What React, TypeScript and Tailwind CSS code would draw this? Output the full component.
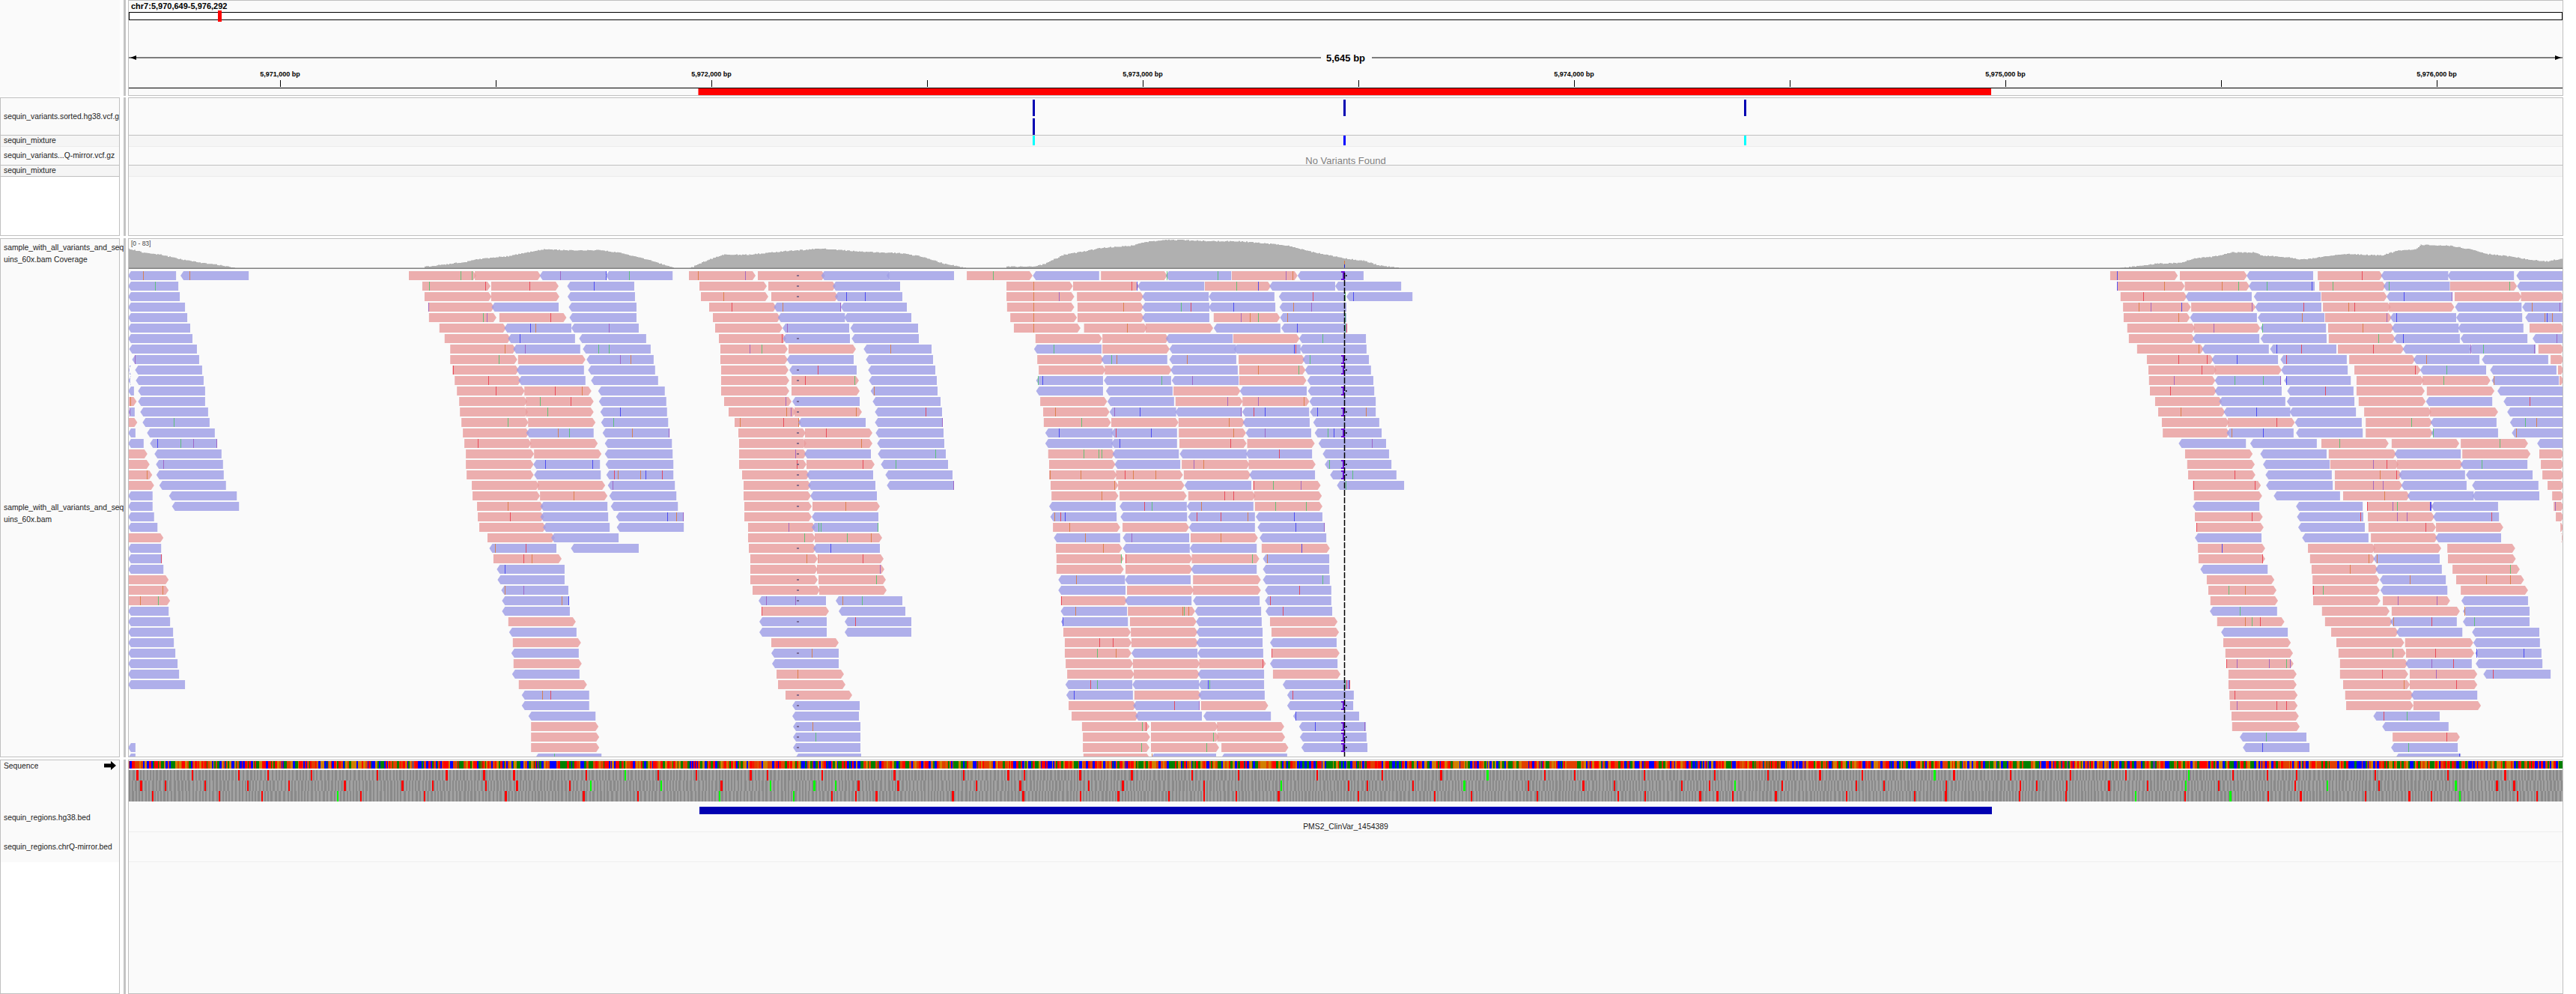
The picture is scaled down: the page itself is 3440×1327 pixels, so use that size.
import React from "react"

type Crop = { ox: number; width: number; rows: string[] }

const PINK = "#e89b9b"
const BLUE = "#9c9ce6"
const MARKS: Record<string, string> = {
  g: "#4fc26a",
  r: "#e8394a",
  b: "#3b3bf0",
  o: "#d9793c",
  v: "#9a5cc0",
}

const crops: Crop[] = [
  {
    ox: 160,
    width: 780,
    rows: [
      "b22-151:62o b163-346:186o p776-957:914g,944g p953-1130 b1127-1307:1183v,1305b b1305-1484:1366g",
      "b22-157:95g p812-995:830g,980r p997-1178:1099r b1201-1381:1273b",
      "b22-161 p818-998 p997-1180 b1202-1383",
      "b22-175 p828-1005:828v b998-1178 b1205-1387",
      "b22-181 p830-1011:974g,985v p1019-1199:1155r b1207-1387",
      "b22-189 p858-1037 b1032-1212:1101b,1115o b1212-1393:1312v",
      "b22-195 p872-1049 b1042-1222:1074b b1233-1413",
      "b25-207 p887-1063:1034o b1056-1236:1087v b1243-1425:1284g,1312g",
      "b33-213:41v p887-1067:1018g p1069-1250 b1253-1433:1342v,1370o",
      "b22-26 b41-221 p893-1071:895r b1065-1246 b1257-1437",
      "b22-28 b43-225 p899-1077:990r b1070-1250 b1265-1445",
      "b22-38 b49-229 p905-1087:1010r p1086-1266:1167r,1241o b1284-1463",
      "p22-45:29o b49-229 p911-1094 p1090-1272:1127g,1211r b1286-1467",
      "b22-40:27v b55-237 p913-1096 p1090-1272:1147g b1290-1469:1342b",
      "p22-47 b61-241:144g p917-1097:1042g p1096-1277 b1292-1472:1324g",
      "b22-42 b73-255 p921-1099 b1091-1272:1177o,1207g b1296-1476:1376o,1474v",
      "b22-64 b81-261:100b,162g,198v,259v p925-1105:960r p1102-1283 b1302-1482",
      "p22-74 b93-273 p929-1112 p1112-1293 b1302-1484",
      "p22-80 b97-277:116v p929-1111 b1110-1289:1141b,1269b b1304-1486",
      "p22-87:73o b98-279 p931-1111 b1112-1291 b1306-1486:1326r,1336o,1398o,1412b,1456r",
      "p22-92 b106-285 p945-1126 p1122-1303 b1310-1490:1322v",
      "b22-88 b132-314 p947-1128 p1128-1309:1219o b1314-1494",
      "b22-88 b140-320 p959-1137:1042o b1129-1309 b1318-1498",
      "b22-92 p961-1139:1048r b1129-1311 b1332-1514:1470b,1493o,1512v",
      "b22-101 p965-1144 b1136-1315 b1334-1514",
      "p22-117 p987-1168 b1158-1339",
      "b22-111 b992-1172:1008o,1089r b1211-1393",
      "b22-113:110r p1003-1186:1083r,1105o",
      "b22-117 b1012-1194:1034b",
      "p22-131 b1014-1194",
      "p22-131:114o b1024-1204:1034o,1083v",
      "p22-135:55o,102g b1026-1206:1187o,1204b",
      "b22-131 b1026-1208",
      "b22-135 p1043-1224",
      "b22-143 b1045-1226",
      "b22-145 p1055-1238",
      "b22-149 b1051-1232",
      "b22-155 p1057-1240",
      "b22-159 b1053-1234",
      "b22-175 p1071-1254",
      "b1079-1260:1133o,1155r",
      "b1079-1260",
      "b1097-1277",
      "p1104-1285",
      "p1104-1287",
      "b22-42 p1104-1287",
      "b22-42 b1115-1293:1165g",
    ],
  },
  {
    ox: 930,
    width: 500,
    rows: [
      "p-30-237:6o,196v p246-515 b500-772 b762-1032",
      "p12-282 p288-558 b546-816",
      "p18-288:109o p300-568 b555-825:601b,676b",
      "p51-320:142r b310-580:346o,575v b578-843",
      "p66-336 b326-595 b592-861",
      "p75-345 b345-612:364v b617-888",
      "p90-360:343r b346-615 b622-891",
      "p96-366:214v,262g p369-639 b670-942:778o",
      "p96-366 b362-630 b679-948",
      "p99-369 b372-642:487r b688-957",
      "p99-372 p381-651:436r,634g b691-963",
      "p99-372 p381-654 b698-966:712o",
      "p111-381:358v b384-654 b706-978",
      "p129-399:361o,379v p393-663:640o b715-984:919r",
      "p153-420:175o,349r,409o b408-678 b715-987:984v",
      "p168-438 p435-705:520r b718-990",
      "p171-441 p432-705:661o b724-993",
      "p171-441:397v b432-699 b727-999:958g",
      "p171-441:403r p441-714:667r b739-1008:799g",
      "p183-453 b441-708 b757-1026",
      "p189-459 b447-717 b763-1032:1030v",
      "p189-459 b456-723",
      "p192-462 p465-735:598o",
      "p192-462 b462-729",
      "p207-477:370v b462-729:490g,499g,725g",
      "p207-477:432g p474-744:604g,700o",
      "p210-480 b468-735:538b",
      "p216-486:442o,487o p486-750:667r",
      "p216-486 p483-753:736v",
      "p216-486 p489-759:721g",
      "p225-495 p492-762",
      "b249-519:280v,397v b558-825:586o,664g",
      "p261-531:262r b570-837",
      "b252-522 b594-861:637r",
      "b252-522 b594-861",
      "p300-570",
      "b300-570:463o",
      "b303-570",
      "p321-591:406o",
      "p327-597",
      "p357-624",
      "b384-654",
      "b384-651",
      "b387-657:466o",
      "b387-657:478g",
      "b387-657",
      "b396-660",
    ],
  },
  {
    ox: 1280,
    width: 620,
    rows: [
      "p28-250:117g b251-475 p481-705 b700-921:702g,876g p923-1145:1106v,1129o b1145-1368",
      "p162-386:254o p387-610:583r,601b b605-830 p832-1055:939g,1012b b1050-1272 b1272-1495",
      "p162-391:254o,340v p400-625 b620-845 b845-1067 b1082-1305:1197r,1305g b1310-1533:1333b",
      "p164-391:254o p402-625:557o b620-847:750g,785r b845-1070:927b b1084-1310:1131o,1190v",
      "p175-400:254o p402-627 b620-847 p862-1086:954v,985o,1012g b1086-1310:1109o,1306g",
      "p187-412:254o p424-637:570o p632-860 b862-1087 b1090-1312:1142b,1306g,1311r",
      "p260-485 p486-710 b700-926 p928-1152 b1150-1376:1230g",
      "b255-483:320g p486-713 b712-937 b930-1155:1134b,1139r b1153-1378",
      "p266-490 b482-705:517g,534o b712-938:772o p946-1170 b1162-1386:1187g",
      "p271-497 p494-720 b716-943 p948-1172:1012o,1147g b1170-1393",
      "b262-488:268g,284b b491-718:686g b720-946:790v p948-1175 b1178-1401",
      "b262-488 b498-723 p726-952 b950-1176 b1180-1404",
      "p276-502 b503-728 p733-960:909v p959-1185:1012v,1167o b1185-1409",
      "p286-510:325o b510-735:527v,613b b732-957:953v b958-1184:997r,1035b b1187-1409:1212b,1376o",
      "p288-515:416g p516-743 p743-967:914o b960-1186 b1198-1421",
      "b293-520:340b b516-738:530r,651b p744-971:929o b970-1191:1035v b1203-1429:1248g,1266b",
      "b293-520 b516-738:545b p746-973:919r p975-1203 b1216-1444:1397v",
      "p303-528:423g,474g,482g b520-744 b747-973 b970-1194:1083r b1230-1454",
      "p306-530 b527-749 p754-983:793v,828o p980-1206 b1237-1462:1252g",
      "p306-535:309o,413o p532-758:562r,590o,666o p761-987 b982-1204 b1255-1479:1331g",
      "p311-540:525o p539-763 b763-989 p995-1223:997r,1063g,1157v b1278-1505:1307g",
      "p314-540:484o p544-771 p776-1003:899r,929r p998-1227",
      "b306-531 b544-771:628r,653g b771-996:820o p1001-1229:1070g,1174g",
      "b310-534:324o,345r,358b b547-772 b775-1001:805r,884r,975o b1004-1229:1134b",
      "p319-546:375o p554-779 b778-1001 b1010-1237:1139b,1235v",
      "b322-546:428o b555-779:583v p784-1011:886o b1017-1242",
      "p329-553:487o b555-781 b781-1007 p1024-1254:1159b",
      "p331-558:548g p564-790:565r p788-1016:992g b1028-1252:1043o",
      "p331-558 p564-790 b785-1007 b1028-1252",
      "b337-562:398o b562-784 p792-1021 b1028-1254:1230g",
      "b337-564 p569-795 p792-1021 b1035-1259:1151r",
      "p346-570:347r b562-787 b792-1017 b1035-1259:1053r",
      "b345-569:395o p572-799:755o,762g,777o b798-1022 b1037-1262:1094r",
      "b346-572:352b p579-804 b802-1024 p1052-1280",
      "p354-582 p582-808 b803-1027 p1057-1285",
      "p359-585:476r,520r p584-810 b803-1027 b1052-1277",
      "p359-584:468g,532o b584-807 b807-1029 p1058-1287:1058r",
      "p362-590 p589-816 p813-1038:1028r b1052-1280",
      "p367-594 p592-815 b808-1032 p1062-1290",
      "b361-587:444r,469g b587-812 b810-1032:841b,846g b1095-1320:1305g,1311r,1317b,1321r",
      "b364-589:390b p594-820 b810-1034 b1110-1335:1129r",
      "p372-600 b590-813:729r,811v p819-1046 b1110-1333",
      "p382-608 b597-822 b827-1055 b1130-1353:1139b",
      "p417-645:620g,633r p650-877 p873-1100 b1150-1376:1205b,1370v",
      "p420-647 p650-880:860g p874-1103 b1153-1378",
      "p420-645:618g p650-880:836g p888-1114 b1158-1381",
      "p422-646 b650-870:652o b887-1110",
    ],
  },
  {
    ox: 2800,
    width: 640,
    rows: [
      "p44-265:67b p272-492 b490-708 p723-935:868r b930-1150 b1148-1365 b1373-1530",
      "p68-288:67b,221o p288-500:410o,464g b497-713:555g,702b p728-945:772g b938-1155:956g p1156-1375:1350g b1375-1530",
      "p78-295:153r b290-507 b514-733 p735-950 b948-1163:1005b,1161v p1171-1390 p1388-1530",
      "p86-308:138o,177v,278b p309-520:508v b518-735:677r p740-962:824o,843r p956-1170 b1172-1390 b1392-1530:1424o,1513v",
      "p88-305:266o b305-524 b527-745:672o p747-965:949v b960-1176:979b b1176-1392 b1402-1530:1464o,1473b,1490o",
      "p100-322 p318-535:383v b535-750:542g p757-972:870o b965-1184 b1182-1396 p1416-1530",
      "p105-320 b314-532 b536-752 p759-977:922g b972-1188:1003b b1190-1409 b1426-1530:1505v",
      "p132-350:332o b344-563 b567-784:587b,670r p789-1005:905r b1001-1222 b1218-1436:1223v,1265g,1431v p1445-1530",
      "p164-382:266r,359r b376-593:459b b601-818:620r p826-1042 b1036-1252:1079o b1260-1477 p1485-1530",
      "p169-392:342r p386-605 b603-821 p843-1060:1042r b1058-1274:1143g b1287-1504 p1509-1530",
      "p171-388:253v b386-603:452g,543g,600v b613-831:621b p850-1070 p1066-1288:1135g b1292-1512:1299o p1514-1530",
      "p174-392:239r b386-605 b623-840:748r p850-1073 p1080-1301 b1311-1530",
      "p191-410 b400-617 b622-843 p857-1076 b1077-1294 b1331-1530:1417r",
      "p201-420:275o b415-633:522b b631-848 p875-1095 p1090-1313 b1343-1530",
      "p213-433 p429-648:589r b648-867 p880-1098:1028g b1092-1308 b1352-1530:1402g,1437o",
      "p216-435 b425-644:442o,545b b652-870 p880-1100 b1094-1313:1101g b1358-1530:1371o",
      "b268-488 b502-720 p735-955:795g p965-1186 p1191-1411:1319g b1441-1530",
      "p289-510 b535-752 p759-980 b974-1191 p1196-1419 p1448-1530",
      "p296-517 b544-762 p764-988:903v,947r p982-1198 b1190-1409:1260g p1453-1530",
      "p299-519:452r b552-769 p779-998:925o,981r b988-1205 b1208-1426 p1458-1530",
      "p315-537:316r,518r b554-772 p779-1000:905v,937v b996-1210 b1228-1445 p1475-1530",
      "p318-541 b579-796 p806-1024:941o b1016-1233 b1229-1448 p1490-1530",
      "b314-532 b652-870 p885-1100:885r,968v,983g,1090b,1093b b1094-1313 p1495-1530:1500v",
      "p321-543:508r b655-872:863r p887-1105:983v,1015v b1100-1316:1292r p1502-1530",
      "p326-546:327r b659-877 p889-1110:1075r p1110-1330 p1517-1530",
      "b321-539 b672-889 p897-1115 b1108-1323 p1522-1530",
      "p331-551:410b p691-912 p906-1127 p1147-1369",
      "p333-551:541r p698-910:890o b905-1122:917o p1149-1371",
      "b339-559 p703-920:829o b912-1129 p1164-1384:1353g",
      "p360-581 p706-925 b926-1142:1025o p1176-1398:1275o,1353o",
      "p365-588:432g,486o p706-926:708r,741g b928-1147 p1191-1411",
      "p372-593 p708-928 p936-1156:986v,1113v b1193-1411",
      "b370-590:468g p737-958 p965-1188 b1198-1416:1204o",
      "p394-614:484o,508g,533r p747-968 b960-1178:971o,1094r b1198-1416:1236g",
      "b407-625 p767-987 b980-1196 b1228-1448",
      "p414-635 p784-1006 p1009-1232 b1232-1450",
      "p421-642 p791-1011:968g p1012-1235:1108r b1238-1455:1243b,1397b",
      "p424-644:425r,457v,564v,621g,631v p796-1018 b1010-1227:1096v,1167r b1240-1458",
      "p431-654 p796-1019:934r p1024-1245:1111v b1265-1485:1297r",
      "p431-654 p806-1025:1005o p1024-1245:1175r",
      "p434-657:451r p813-1036 b1028-1245",
      "p436-657:459v,587r,621r p816-1036 p1036-1257",
      "p441-661 b905-1122:939r,1015g",
      "p443-664 b934-1151",
      "b468-686:554g p968-1188:1143r",
      "b478-696:542b b963-1181:1020g",
      "b977-1191:1187b",
    ],
  },
]

const insertionRows = [0, 8, 9, 11, 13, 15, 18, 19, 41, 43, 44, 45]
const gapRows = [0, 1, 2, 6, 9, 10, 12, 13, 15, 16, 17, 18, 19, 20, 22, 26, 29, 30, 31, 33, 36, 40, 41, 43, 44, 45]

const coverage: [number, number][][] = [
  [[171, 332], [190, 337], [214, 340], [240, 346], [270, 351], [300, 355], [316, 358]],
  [[567, 356], [594, 353], [625, 349], [638, 346], [678, 342], [724, 333], [760, 334], [800, 334], [830, 338], [866, 347], [900, 358]],
  [[921, 358], [940, 349], [965, 340], [1000, 340], [1050, 335], [1097, 332], [1150, 336], [1200, 338], [1228, 342], [1260, 352], [1290, 358]],
  [[1344, 356], [1380, 356], [1395, 352], [1420, 340], [1445, 336], [1470, 331], [1510, 328], [1530, 323], [1560, 320], [1590, 321], [1620, 322], [1650, 322], [1680, 324], [1720, 328], [1745, 335], [1770, 340], [1795, 345], [1820, 348], [1840, 354], [1870, 358]],
  [[2831, 358], [2865, 354], [2880, 352], [2910, 351], [2930, 345], [2960, 342], [2980, 337], [3010, 337], [3020, 341], [3060, 344], [3070, 347], [3100, 343], [3130, 339], [3180, 341], [3200, 335], [3225, 333], [3232, 327], [3270, 328], [3300, 333], [3320, 339], [3350, 342], [3380, 347], [3400, 349], [3422, 345]],
]

const rng = (seed: number) => () => {
  seed = (seed * 1664525 + 1013904223) % 4294967296
  return seed / 4294967296
}

const ticks = [374, 662, 950, 1238, 1526, 1814, 2102, 2390, 2678, 2966, 3254]
const labels: [number, string][] = [
  [374, "5,971,000 bp"],
  [950, "5,972,000 bp"],
  [1526, "5,973,000 bp"],
  [2102, "5,974,000 bp"],
  [2678, "5,975,000 bp"],
  [3254, "5,976,000 bp"],
]

const readPoints = (x0: number, x1: number, y: number, pink: boolean) =>
  pink
    ? `${x0},${y} ${x1 - 4},${y} ${x1},${y + 6} ${x1 - 4},${y + 12} ${x0},${y + 12}`
    : `${x0 + 4},${y} ${x1},${y} ${x1},${y + 12} ${x0 + 4},${y + 12} ${x0},${y + 6}`

const Reads = () => {
  const items: React.ReactNode[] = []
  crops.forEach((crop) => {
    const scale = Math.min(3, 1568 / crop.width)
    const toX = (v: number) => Math.min(crop.ox + v / scale, 3424)
    crop.rows.forEach((row, r) => {
      const y = 362 + r * 14
      row.split(" ").forEach((token, i) => {
        const m = token.match(/^([pb])(-?\d+)-(\d+)(?::(.*))?$/)
        if (!m) return
        const pink = m[1] === "p"
        items.push(
          <polygon
            key={`${crop.ox}-${r}-${i}`}
            points={readPoints(toX(+m[2]), toX(+m[3]), y, pink)}
            fill={pink ? PINK : BLUE}
            fillOpacity={0.8}
          />
        )
        if (m[4]) {
          m[4].split(",").forEach((mark) => {
            const v = parseInt(mark)
            items.push(
              <rect
                key={`${crop.ox}-${r}-${i}-${mark}`}
                x={Math.round(toX(v))}
                y={y}
                width={1}
                height={12}
                fill={MARKS[mark.slice(-1)]}
                fillOpacity={0.85}
              />
            )
          })
        }
      })
    })
  })
  return <>{items}</>
}

const coveragePoints = (line: [number, number][], seed: number) => {
  const rand = rng(seed)
  const pts: string[] = [`${line[0][0]},358`]
  for (let i = 0; i < line.length - 1; i++) {
    const [x0, y0] = line[i]
    const [x1, y1] = line[i + 1]
    for (let x = x0; x < x1; x += 2) {
      const top = Math.min(358, y0 + ((y1 - y0) * (x - x0)) / (x1 - x0) + rand() * 1.2 - 0.6)
      pts.push(`${x},${top.toFixed(1)}`, `${x + 2},${top.toFixed(1)}`)
    }
  }
  pts.push(`${line[line.length - 1][0]},358`)
  return pts.join(" ")
}

const AlignmentTrack = () => (
  <svg viewBox="172 319 3250 691" className="block h-[691px] w-[3250px]">
    {coverage.map((line, i) => (
      <polygon key={i} points={coveragePoints(line, i + 7)} fill="#b0b0b0" />
    ))}
    <rect x={1795} y={348} width={1} height={5} fill="#d9793c" />
    <rect x={1795} y={353} width={1} height={5} fill="#2020d0" />
    <rect x={172} y={357.5} width={3250} height={1.5} fill="#808080" />
    <text x={175} y={328} fontSize={8.5} fill="#444">[0 - 83]</text>
    <Reads />
    {gapRows.map((r) => (
      <rect key={r} x={1064} y={362 + r * 14 + 5} width={3} height={2} fill="#6a5a80" fillOpacity={0.8} />
    ))}
    {insertionRows.map((r) => {
      const y = 362 + r * 14
      return (
        <g key={r} fill="#6a10d8">
          <rect x={1793} y={y} width={2} height={12} />
          <rect x={1791} y={y} width={5} height={2} />
          <rect x={1791} y={y + 10} width={5} height={2} />
          <rect x={1797} y={y + 5} width={1.5} height={2} fill="#000" />
        </g>
      )
    })}
    <line x1={1795.5} y1={364} x2={1795.5} y2={1010} stroke="#000" strokeWidth={1.5} strokeDasharray="8 2" />
  </svg>
)

const SequenceStrips = () => {
  const rand = rng(41)
  const bases = ["#0000ff", "#ff0000", "#008000", "#d08000", "#e04000"]
  const band: React.ReactNode[] = []
  for (let x = 172; x < 3422; ) {
    const w = 1 + Math.floor(rand() * 3)
    band.push(<rect key={x} x={x} y={1016} width={w} height={10} fill={bases[Math.floor(rand() * bases.length)]} />)
    x += w
  }
  const strips: React.ReactNode[] = []
  ;[1028, 1042, 1056].forEach((y) => {
    let dark = true
    for (let x = 172; x < 3422; ) {
      const w = rand() < 0.3 ? 3 : 2
      strips.push(<rect key={`${y}-${x}`} x={x} y={y} width={w} height={14} fill={dark ? "#8a8a8a" : "#a2a2a2"} />)
      dark = !dark
      x += w
    }
    for (let x = 172 + rand() * 40; x < 3420; x += 20 + rand() * 90) {
      strips.push(
        <rect
          key={`m${y}-${x}`}
          x={Math.round(x)}
          y={y}
          width={rand() < 0.35 ? 3 : 2}
          height={14}
          fill={rand() < 0.2 ? "#00ff00" : "#ff0000"}
        />
      )
    }
  })
  return (
    <svg viewBox="172 1015 3250 56" className="block h-[56px] w-[3250px]">
      {band}
      {strips}
    </svg>
  )
}

const Ruler = () => (
  <svg viewBox="172 1 3250 126" className="block h-[126px] w-[3250px]">
    <text x={175} y={12} fontSize={11} fontWeight={700} fill="#000">chr7:5,970,649-5,976,292</text>
    <rect x={172.5} y={16.5} width={3249} height={10} fill="#fff" stroke="#000" />
    <rect x={291} y={14} width={5} height={15} fill="#ff0000" />
    <rect x={172} y={76.5} width={3250} height={1} fill="#000" />
    <polygon points="174,77 182,74 182,80" fill="#000" />
    <polygon points="3420,77 3412,74 3412,80" fill="#000" />
    <rect x={1764} y={70} width={68} height={14} fill="#fafafa" />
    <text x={1797} y={82} fontSize={13} fontWeight={700} textAnchor="middle" fill="#000">5,645 bp</text>
    {labels.map(([x, label]) => (
      <text key={x} x={x} y={102} fontSize={9} fontWeight={700} textAnchor="middle" fill="#000">{label}</text>
    ))}
    {ticks.map((x) => (
      <rect key={x} x={x} y={107} width={1} height={9} fill="#000" />
    ))}
    <rect x={172} y={117} width={3250} height={1} fill="#000" />
    <rect x={932.5} y={118} width={1726.5} height={9} fill="#ff0000" />
  </svg>
)

const VariantRow = () => (
  <svg viewBox="172 131 3250 49" className="block h-[49px] w-[3250px]">
    <rect x={1379} y={133} width={3} height={22} fill="#0000b2" />
    <rect x={1379} y={158} width={3} height={22} fill="#0000b2" />
    <rect x={1794} y={133} width={3} height={22} fill="#0000b2" />
    <rect x={2329} y={133} width={3} height={22} fill="#0000b2" />
  </svg>
)

const GenotypeRow = () => (
  <svg viewBox="172 181 3250 14" className="block h-[14px] w-[3250px]">
    <rect x={1379} y={181} width={3} height={13} fill="#00ffff" />
    <rect x={1794} y={181} width={3} height={13} fill="#0000ff" />
    <rect x={2329} y={181} width={3} height={13} fill="#00ffff" />
  </svg>
)

const Name = ({ children, className = "" }: { children: React.ReactNode; className?: string }) => (
  <div className={`ml-[4px] w-[161px] overflow-hidden whitespace-nowrap text-[10.3px] leading-[16px] text-[#222] ${className}`}>
    {children}
  </div>
)

const Panel = ({ className, left, children }: { className: string; left: React.ReactNode; children: React.ReactNode }) => (
  <div className={`flex ${className}`}>
    <div className="w-[160px] shrink-0">{left}</div>
    <div className="ml-[5px] w-[3px] shrink-0 bg-[#c4c4c4]" />
    <div className="ml-[3px] flex w-[3252px] shrink-0 flex-col overflow-hidden border border-[#c0c0c0] bg-[#fafafa]">
      {children}
    </div>
  </div>
)

export default function App() {
  return (
    <div className="h-[1327px] w-[3440px] overflow-hidden bg-white font-['Liberation_Sans',Arial,sans-serif]">
      <Panel className="h-[128px]" left={<div className="h-full bg-[#fafafa]" />}>
        <Ruler />
      </Panel>

      <Panel
        className="mt-[2px] h-[185px]"
        left={
          <div className="flex h-full flex-col border border-[#c0c0c0] bg-white">
            <div className="flex h-[50px] items-center border-b border-[#c0c0c0] bg-[#fafafa]">
              <Name>sequin_variants.sorted.hg38.vcf.gz</Name>
            </div>
            <div className="flex h-[15px] items-center border-b border-[#ececec] bg-[#f5f5f5]">
              <Name>sequin_mixture</Name>
            </div>
            <div className="flex h-[25px] items-center border-b border-[#c0c0c0] bg-[#fafafa]">
              <Name>sequin_variants...Q-mirror.vcf.gz</Name>
            </div>
            <div className="flex h-[15px] items-center border-b border-[#c0c0c0] bg-[#f5f5f5]">
              <Name>sequin_mixture</Name>
            </div>
          </div>
        }
      >
        <div className="h-[50px] border-b border-[#c0c0c0]">
          <VariantRow />
        </div>
        <div className="h-[15px] border-b border-[#ececec] bg-[#f5f5f5]">
          <GenotypeRow />
        </div>
        <div className="flex h-[25px] items-end justify-center overflow-hidden border-b border-[#c0c0c0]">
          <span className="text-[13px] leading-[11px] text-[#808080]">No Variants Found</span>
        </div>
        <div className="h-[15px] border-b border-[#ececec] bg-[#f5f5f5]" />
      </Panel>

      <Panel
        className="mt-[3px] h-[693px]"
        left={
          <div className="h-full border border-[#c0c0c0] bg-[#fafafa]">
            <div className="pt-[4px]">
              <Name>sample_with_all_variants_and_seq</Name>
              <Name>uins_60x.bam Coverage</Name>
            </div>
            <div className="pt-[315px]">
              <Name>sample_with_all_variants_and_seq</Name>
              <Name>uins_60x.bam</Name>
            </div>
          </div>
        }
      >
        <AlignmentTrack />
      </Panel>

      <Panel
        className="mt-[3px] h-[313px]"
        left={
          <div className="h-full border border-[#c0c0c0] bg-white">
            <div className="h-[56px] bg-[#fafafa]">
              <div className="flex items-start justify-between pr-[4px]">
                <Name className="w-auto">Sequence</Name>
                <svg viewBox="0 0 16 12" className="mt-[1px] h-[12px] w-[16px]">
                  <path d="M0 3.5h9V0l7 6-7 6V8.5H0z" fill="#000" />
                </svg>
              </div>
            </div>
            <div className="flex h-[40px] items-end bg-[#fafafa] pb-[11px]">
              <Name>sequin_regions.hg38.bed</Name>
            </div>
            <div className="flex h-[40px] items-center bg-[#fafafa]">
              <Name>sequin_regions.chrQ-mirror.bed</Name>
            </div>
          </div>
        }
      >
        <SequenceStrips />
        <div className="flex h-[40px] flex-col items-center border-b border-[#eeeeee]">
          <div className="mt-[6px] h-[10px] w-[1726.5px] bg-[#0000b2]" />
          <span className="mt-[11px] text-[10.4px] leading-[12px] text-[#222]">PMS2_ClinVar_1454389</span>
        </div>
        <div className="h-[40px] border-b border-[#eeeeee]" />
      </Panel>
    </div>
  )
}
